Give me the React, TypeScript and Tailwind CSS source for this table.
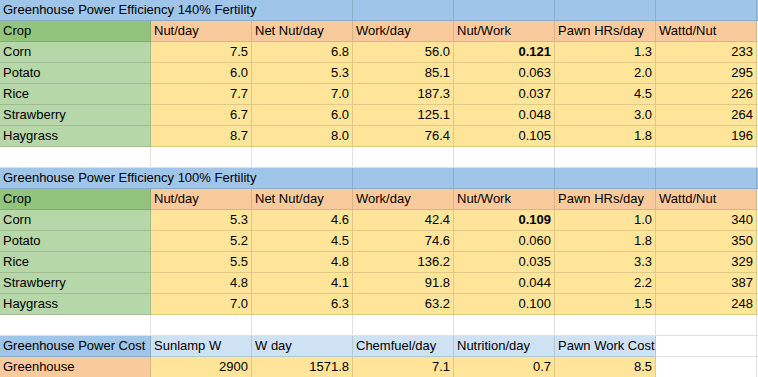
import React from 'react';

type Row = [string, string, string, string, string, string, string];

const fert140: Row[] = [
  ['Corn', '7.5', '6.8', '56.0', '0.121', '1.3', '233'],
  ['Potato', '6.0', '5.3', '85.1', '0.063', '2.0', '295'],
  ['Rice', '7.7', '7.0', '187.3', '0.037', '4.5', '226'],
  ['Strawberry', '6.7', '6.0', '125.1', '0.048', '3.0', '264'],
  ['Haygrass', '8.7', '8.0', '76.4', '0.105', '1.8', '196'],
];

const fert100: Row[] = [
  ['Corn', '5.3', '4.6', '42.4', '0.109', '1.0', '340'],
  ['Potato', '5.2', '4.5', '74.6', '0.060', '1.8', '350'],
  ['Rice', '5.5', '4.8', '136.2', '0.035', '3.3', '329'],
  ['Strawberry', '4.8', '4.1', '91.8', '0.044', '2.2', '387'],
  ['Haygrass', '7.0', '6.3', '63.2', '0.100', '1.5', '248'],
];

const headers = ['Nut/day', 'Net Nut/day', 'Work/day', 'Nut/Work', 'Pawn HRs/day', 'Wattd/Nut'];

const Cell: React.FC<{ bg?: string; right?: boolean; bold?: boolean; span?: boolean; children?: React.ReactNode }> = ({
  bg = 'bg-white',
  right,
  bold,
  span,
  children,
}) => (
  <div
    className={`${bg} ${span ? 'col-span-3' : ''} h-[21px] border-r border-b border-[#0000001f] px-[3px] leading-[20px] whitespace-nowrap overflow-hidden ${
      right ? 'text-right' : ''
    } ${bold ? 'font-bold' : ''}`}
  >
    {children}
  </div>
);

const Block: React.FC<{ title: string; rows: Row[] }> = ({ title, rows }) => (
  <>
    <Cell bg="bg-[#9fc5e8]" span>{title}</Cell>
    <Cell bg="bg-[#9fc5e8]" />
    <Cell bg="bg-[#9fc5e8]" />
    <Cell bg="bg-[#9fc5e8]" />
    <Cell bg="bg-[#9fc5e8]" />
    <Cell bg="bg-[#9fc5e8]" />

    <Cell bg="bg-[#93c47d]">Crop</Cell>
    {headers.map(h => (
      <Cell key={h} bg="bg-[#f9cb9c]">{h}</Cell>
    ))}
    <Cell />

    {rows.map(r => (
      <React.Fragment key={r[0]}>
        <Cell bg="bg-[#b6d7a8]">{r[0]}</Cell>
        {r.slice(1).map((v, i) => (
          <Cell key={i} bg="bg-[#ffe599]" right bold={i === 3 && r[0] === 'Corn'}>
            {v}
          </Cell>
        ))}
        <Cell />
      </React.Fragment>
    ))}

    {Array.from({ length: 8 }).map((_, i) => (
      <Cell key={i} />
    ))}
  </>
);

export default function App() {
  return (
    <div className="w-[758px] h-[377px] overflow-hidden bg-white">
      <div
        className="grid grid-cols-[151px_101px_101px_101px_101px_101px_101px_101px] text-[13px] text-black -mt-0"
        style={{ fontFamily: '"Liberation Sans", Arial, sans-serif' }}
      >
        <Block title="Greenhouse Power Efficiency 140% Fertility" rows={fert140} />
        <Block title="Greenhouse Power Efficiency 100% Fertility" rows={fert100} />

        <Cell bg="bg-[#9fc5e8]">Greenhouse Power Cost</Cell>
        <Cell bg="bg-[#cfe2f3]">Sunlamp W</Cell>
        <Cell bg="bg-[#cfe2f3]">W day</Cell>
        <Cell bg="bg-[#cfe2f3]">Chemfuel/day</Cell>
        <Cell bg="bg-[#cfe2f3]">Nutrition/day</Cell>
        <Cell bg="bg-[#cfe2f3]">Pawn Work Cost</Cell>
        <Cell />
        <Cell />

        <Cell bg="bg-[#f9cb9c]">Greenhouse</Cell>
        <Cell bg="bg-[#ffe599]" right>2900</Cell>
        <Cell bg="bg-[#ffe599]" right>1571.8</Cell>
        <Cell bg="bg-[#ffe599]" right>7.1</Cell>
        <Cell bg="bg-[#ffe599]" right>0.7</Cell>
        <Cell bg="bg-[#ffe599]" right>8.5</Cell>
        <Cell />
        <Cell />
      </div>
    </div>
  );
}
